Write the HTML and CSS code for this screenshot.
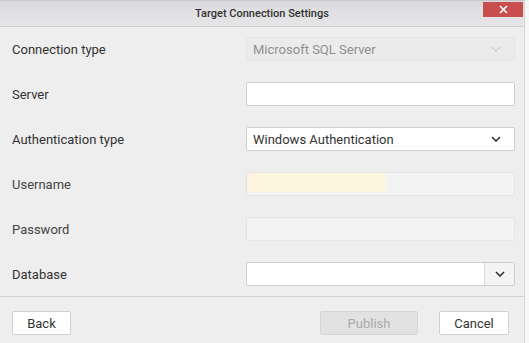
FILE: index.html
```html
<!doctype html>
<html lang="en">
<head>
    <meta charset="UTF-8">
    <title>Target Connection Settings</title>
    <link rel="stylesheet" href="styles.css">
</head>
<body>
<div class="dialog">
    <div class="titlebar">
        <span class="title">Target Connection Settings</span>
        <span class="close">
            <svg width="9" height="9" viewBox="0 0 9 9"><path d="M1 1L8 8M8 1L1 8" stroke="#fff" stroke-width="1.6"/></svg>
        </span>
    </div>
    <div class="content">
        <div class="row">
            <label>Connection type</label>
            <div class="field select disabled">
                <span class="value">Microsoft SQL Server</span>
                <svg class="chev" width="10" height="6" viewBox="0 0 10 6"><path d="M1 1L5 5L9 1" fill="none" stroke="#d4d4d4" stroke-width="1.6"/></svg>
            </div>
        </div>
        <div class="row">
            <label>Server</label>
            <div class="field"></div>
        </div>
        <div class="row">
            <label>Authentication type</label>
            <div class="field select">
                <span class="value">Windows Authentication</span>
                <svg class="chev" width="10" height="6" viewBox="0 0 10 6"><path d="M1 1L5 5L9 1" fill="none" stroke="#333" stroke-width="1.6"/></svg>
            </div>
        </div>
        <div class="row">
            <label class="muted">Username</label>
            <div class="field readonly"><span class="autofill"></span></div>
        </div>
        <div class="row">
            <label class="muted">Password</label>
            <div class="field readonly"></div>
        </div>
        <div class="row">
            <label>Database</label>
            <div class="field combo">
                <span class="combo-input"></span>
                <span class="combo-btn">
                    <svg width="10" height="6" viewBox="0 0 10 6"><path d="M1 1L5 5L9 1" fill="none" stroke="#333" stroke-width="1.6"/></svg>
                </span>
            </div>
        </div>
    </div>
    <div class="footer">
        <button class="btn back">Back</button>
        <div class="spacer"></div>
        <button class="btn publish" disabled>Publish</button>
        <button class="btn cancel">Cancel</button>
    </div>
</div>
</body>
</html>
```

FILE: styles.css
```css
html, body{
    margin:0;
    padding:0;
    background-color:#f7f7f7;
}

body{
    font-family: Roboto, "Liberation Sans", sans-serif;
    color:#333;
}

.dialog{
    width:525px;
    height:343px;
    background-color:#eeeeee;
    border-right:1px solid #d6d6d6;
    box-sizing:border-box;
    display:flex;
    flex-direction:column;
}

.titlebar{
    height:27px;
    box-sizing:border-box;
    border-top:1px solid #c8c8c8;
    border-bottom:1px solid #cfcfcf;
    background:linear-gradient(#dcdadd, #e6e5e7);
    display:flex;
    align-items:center;
    justify-content:center;
    position:relative;
}
.title{
    font-size:11px;
    font-weight:500;
    color:#333;
}
.close{
    position:absolute;
    left:483px;
    top:1px;
    width:40px;
    height:15px;
    background-color:#c94f4f;
    display:flex;
    align-items:center;
    justify-content:center;
}

.content{
    padding:10px 0 0 12px;
    display:flex;
    flex-direction:column;
    gap:21px;
}
.row{
    display:flex;
    align-items:center;
    height:24px;
}
.row label{
    width:234px;
    flex-shrink:0;
    font-size:13px;
    color:#333;
}
.row label.muted{
    color:#444;
}

.field{
    width:269px;
    flex-shrink:0;
    height:24px;
    box-sizing:border-box;
    background-color:#fff;
    border:1px solid #cfcfcf;
    border-radius:2px;
    display:flex;
    align-items:center;
    font-size:13px;
}
.select{
    justify-content:space-between;
    padding:0 13px 0 6px;
}
.select.disabled{
    background-color:#ebebeb;
    border-color:#e6e6e6;
    color:#8f8f8f;
}
.readonly{
    background-color:#f3f3f3;
    border-color:#e4e4e4;
    padding:0 0 3px 2px;
    align-items:stretch;
}
.autofill{
    width:137px;
    background-color:#fef6dc;
}
.combo{
    align-items:stretch;
}
.combo-input{
    flex:1;
}
.combo-btn{
    width:29px;
    border-left:1px solid #dadada;
    background-color:#f4f4f4;
    display:flex;
    align-items:center;
    justify-content:center;
}

.footer{
    margin-top:10px;
    border-top:1px solid #d3d3d3;
    padding:14px 15px 0 12px;
    display:flex;
    align-items:center;
}
.spacer{
    flex:1;
}
.btn{
    height:24px;
    font-family: Roboto, "Liberation Sans", sans-serif;
    font-size:13px;
    color:#333;
    background-color:#fff;
    border:1px solid #d0d0d0;
    border-radius:2px;
    padding:0;
}
.back{
    width:59px;
}
.publish{
    width:98px;
    background-color:#e2e2e2;
    color:#aaa;
    border-color:#d6d6d6;
}
.cancel{
    width:70px;
    margin-left:21px;
}
```
